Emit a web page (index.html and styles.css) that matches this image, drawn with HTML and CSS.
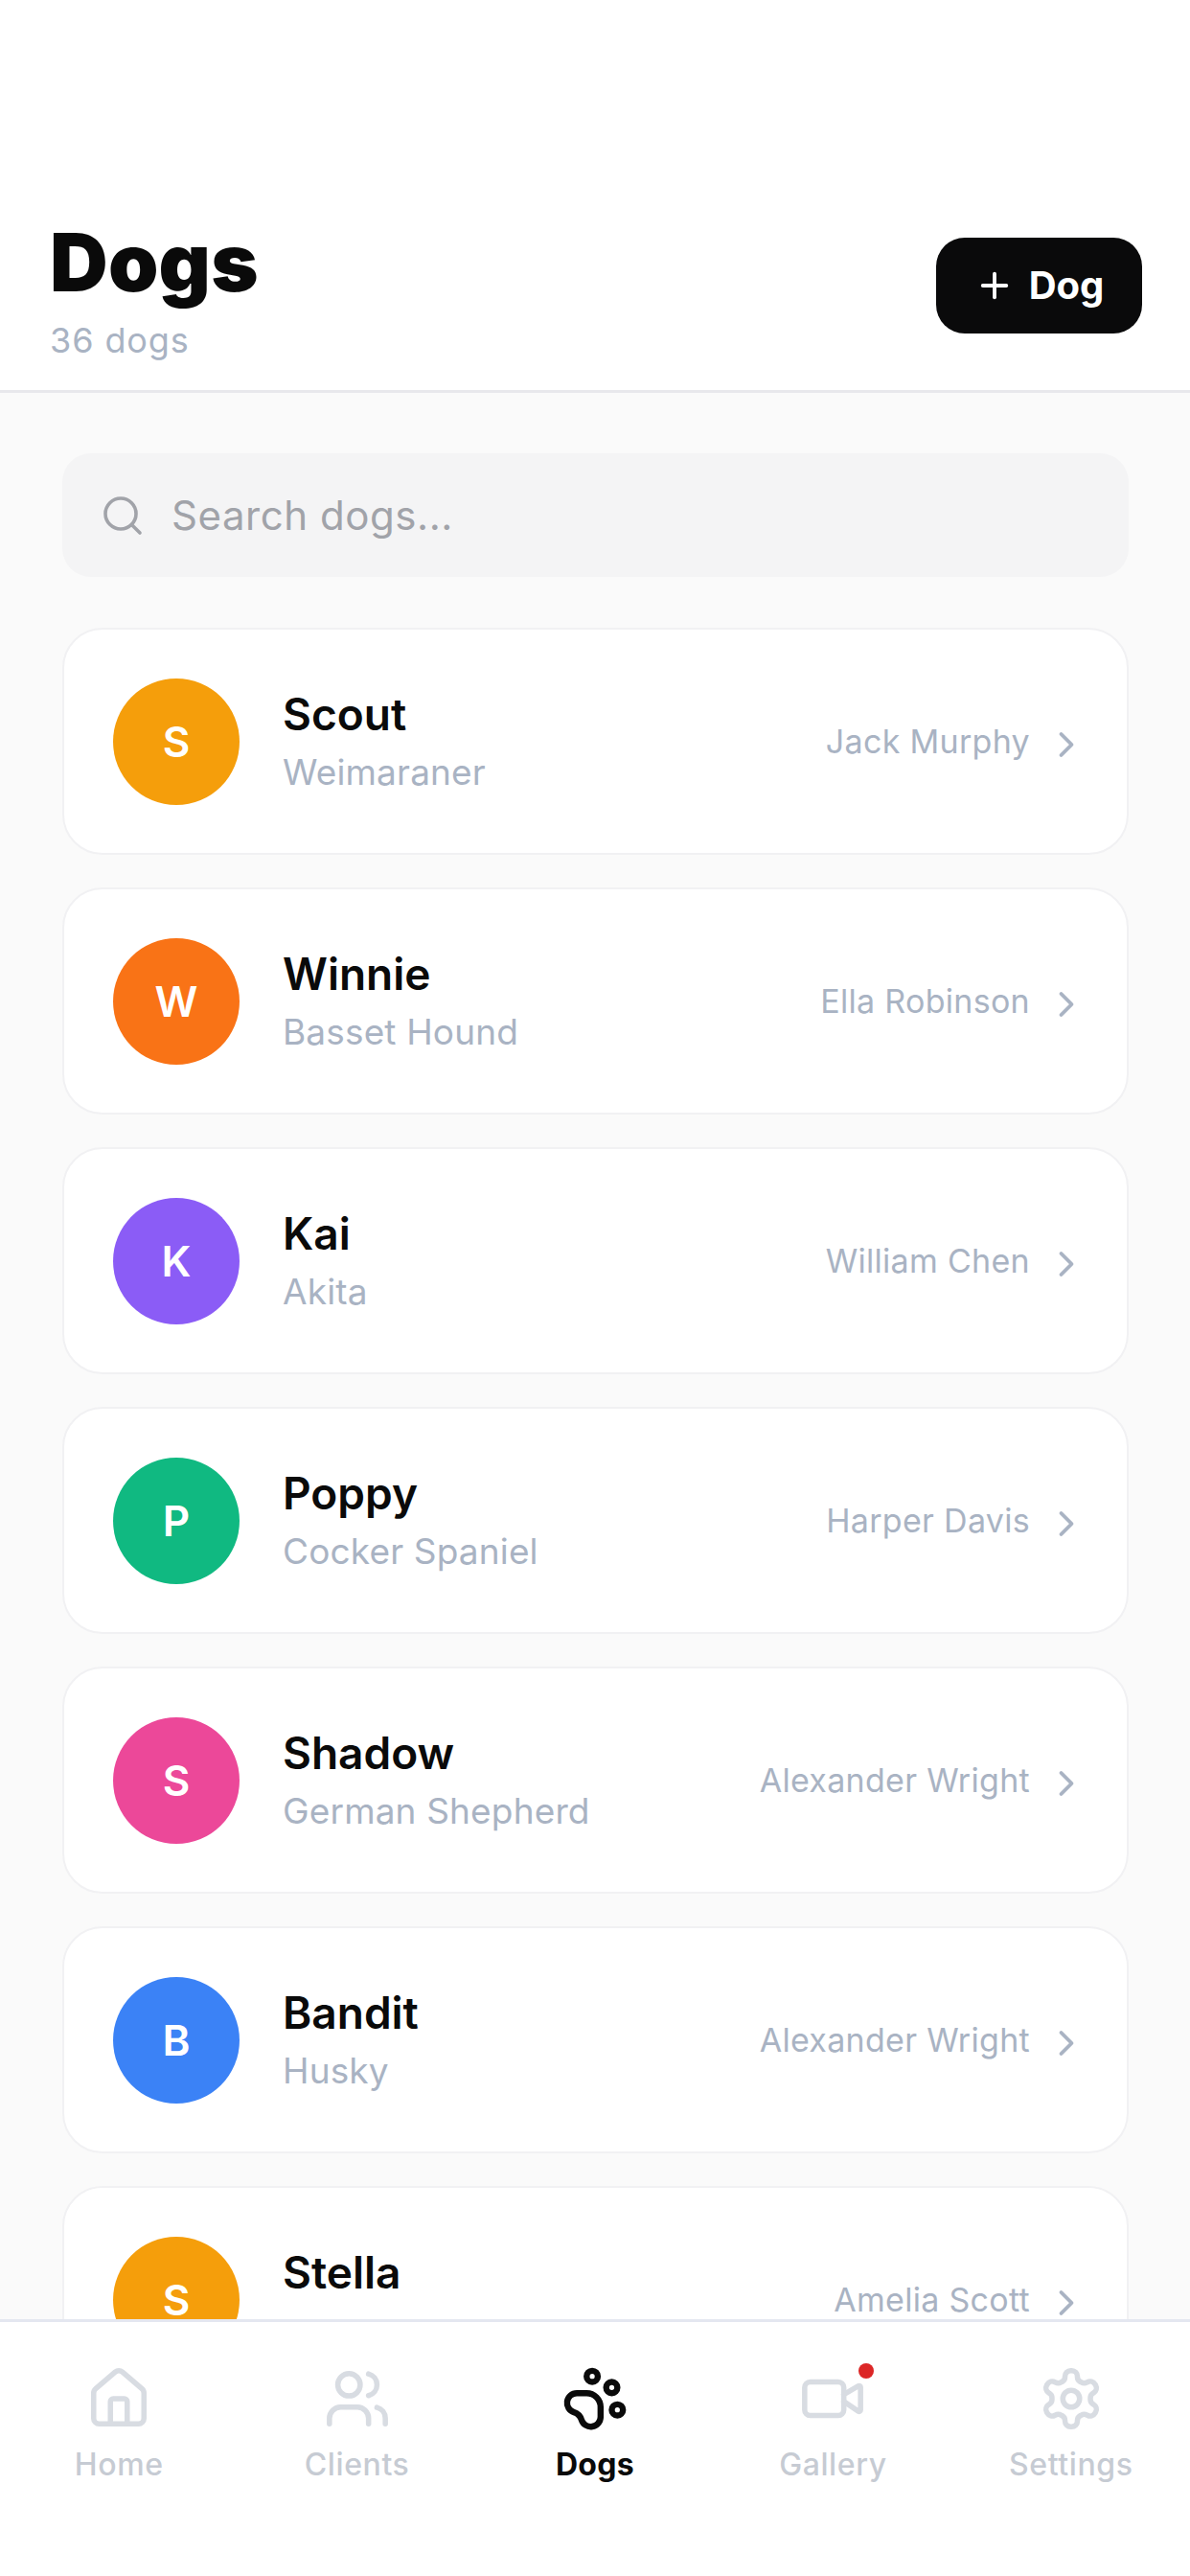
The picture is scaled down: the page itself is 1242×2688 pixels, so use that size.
FILE: index.html
```html
<!DOCTYPE html>
<html lang="en">
<head>
<meta charset="utf-8">
<title>Dogs</title>
<link rel="stylesheet" href="styles.css">
</head>
<body>
<div class="app">
  <header class="header">
    <div class="titles">
      <h1 class="title">Dogs</h1>
      <div class="count">36 dogs</div>
    </div>
    <button class="add-btn">
      <svg class="add-icon" viewBox="0 0 24 24"><path d="M5 12h14"/><path d="M12 5v14"/></svg>
      <span>Dog</span>
    </button>
  </header>
  <main class="main">
    <div class="search">
      <svg class="search-icon" viewBox="0 0 24 24"><circle cx="11" cy="11" r="8"/><path d="m21 21-4.3-4.3"/></svg>
      <span>Search dogs...</span>
    </div>
    <div class="list">
      <div class="card"><div class="avatar amber">S</div><div class="info"><div class="name">Scout</div><div class="breed">Weimaraner</div></div><div class="owner">Jack Murphy</div><svg class="chev" viewBox="0 0 24 24"><path d="m9 18 6-6-6-6"/></svg></div>
      <div class="card"><div class="avatar orange">W</div><div class="info"><div class="name">Winnie</div><div class="breed">Basset Hound</div></div><div class="owner">Ella Robinson</div><svg class="chev" viewBox="0 0 24 24"><path d="m9 18 6-6-6-6"/></svg></div>
      <div class="card"><div class="avatar violet">K</div><div class="info"><div class="name">Kai</div><div class="breed">Akita</div></div><div class="owner">William Chen</div><svg class="chev" viewBox="0 0 24 24"><path d="m9 18 6-6-6-6"/></svg></div>
      <div class="card"><div class="avatar green">P</div><div class="info"><div class="name">Poppy</div><div class="breed">Cocker Spaniel</div></div><div class="owner">Harper Davis</div><svg class="chev" viewBox="0 0 24 24"><path d="m9 18 6-6-6-6"/></svg></div>
      <div class="card"><div class="avatar pink">S</div><div class="info"><div class="name">Shadow</div><div class="breed">German Shepherd</div></div><div class="owner">Alexander Wright</div><svg class="chev" viewBox="0 0 24 24"><path d="m9 18 6-6-6-6"/></svg></div>
      <div class="card"><div class="avatar blue">B</div><div class="info"><div class="name">Bandit</div><div class="breed">Husky</div></div><div class="owner">Alexander Wright</div><svg class="chev" viewBox="0 0 24 24"><path d="m9 18 6-6-6-6"/></svg></div>
      <div class="card"><div class="avatar amber">S</div><div class="info"><div class="name">Stella</div><div class="breed">&nbsp;</div></div><div class="owner">Amelia Scott</div><svg class="chev" viewBox="0 0 24 24"><path d="m9 18 6-6-6-6"/></svg></div>
    </div>
  </main>
  <nav class="nav">
    <div class="tab">
      <svg class="tab-icon" viewBox="0 0 24 24"><path d="M15 21v-8a1 1 0 0 0-1-1h-4a1 1 0 0 0-1 1v8"/><path d="M3 10a2 2 0 0 1 .709-1.528l7-5.999a2 2 0 0 1 2.582 0l7 5.999A2 2 0 0 1 21 10v9a2 2 0 0 1-2 2H5a2 2 0 0 1-2-2z"/></svg>
      <span class="tab-label">Home</span>
    </div>
    <div class="tab">
      <svg class="tab-icon" viewBox="0 0 24 24"><path d="M16 21v-2a4 4 0 0 0-4-4H6a4 4 0 0 0-4 4v2"/><circle cx="9" cy="7" r="4"/><path d="M22 21v-2a4 4 0 0 0-3-3.87"/><path d="M16 3.13a4 4 0 0 1 0 7.75"/></svg>
      <span class="tab-label">Clients</span>
    </div>
    <div class="tab active">
      <svg class="tab-icon" viewBox="0 0 24 24"><circle cx="11" cy="4" r="2"/><circle cx="18" cy="8" r="2"/><circle cx="20" cy="16" r="2"/><path d="M9 10a5 5 0 0 1 5 5v3.5a3.5 3.5 0 0 1-6.84 1.045Q6.52 17.48 4.46 16.84A3.5 3.5 0 0 1 5.5 10Z"/></svg>
      <span class="tab-label">Dogs</span>
    </div>
    <div class="tab">
      <div class="icon-wrap">
        <svg class="tab-icon" viewBox="0 0 24 24"><path d="m16 13 5.223 3.482a.5.5 0 0 0 .777-.416V7.87a.5.5 0 0 0-.752-.432L16 10.5"/><rect x="2" y="6" width="14" height="12" rx="2"/></svg>
        <span class="dot"></span>
      </div>
      <span class="tab-label">Gallery</span>
    </div>
    <div class="tab">
      <svg class="tab-icon" viewBox="0 0 24 24"><path d="M12.22 2h-.44a2 2 0 0 0-2 2v.18a2 2 0 0 1-1 1.73l-.43.25a2 2 0 0 1-2 0l-.15-.08a2 2 0 0 0-2.73.73l-.22.38a2 2 0 0 0 .73 2.73l.15.1a2 2 0 0 1 1 1.72v.51a2 2 0 0 1-1 1.74l-.15.09a2 2 0 0 0-.73 2.73l.22.38a2 2 0 0 0 2.73.73l.15-.08a2 2 0 0 1 2 0l.43.25a2 2 0 0 1 1 1.73V20a2 2 0 0 0 2 2h.44a2 2 0 0 0 2-2v-.18a2 2 0 0 1 1-1.73l.43-.25a2 2 0 0 1 2 0l.15.08a2 2 0 0 0 2.73-.73l.22-.39a2 2 0 0 0-.73-2.73l-.15-.08a2 2 0 0 1-1-1.74v-.5a2 2 0 0 1 1-1.74l.15-.09a2 2 0 0 0 .73-2.73l-.22-.38a2 2 0 0 0-2.73-.73l-.15.08a2 2 0 0 1-2 0l-.43-.25a2 2 0 0 1-1-1.73V4a2 2 0 0 0-2-2z"/><circle cx="12" cy="12" r="3"/></svg>
      <span class="tab-label">Settings</span>
    </div>
  </nav>
</div>
</body>
</html>
```
FILE: styles.css
```css
* { box-sizing: border-box; }
html, body { margin: 0; padding: 0; background: #fff; }
body { font-family: Inter, "Liberation Sans", sans-serif; color: #0a0a0a; }
svg { fill: none; stroke: currentColor; stroke-width: 2; stroke-linecap: round; stroke-linejoin: round; display: block; }

.app { width: 1242px; height: 2688px; display: flex; flex-direction: column; overflow: hidden; }

.header { height: 410px; flex: none; background: #fff; border-bottom: 3px solid #e8e8ec; padding: 226px 50px 0 52px; display: flex; justify-content: space-between; align-items: flex-start; }
.titles { display: flex; flex-direction: column; }
.title { margin: 0; font-size: 84px; line-height: 96px; font-weight: 900; letter-spacing: 0.2px; color: #0a0a0a; }
.count { font-size: 36px; line-height: 48px; color: #a9b3c3; letter-spacing: 0.9px; margin-top: 9px; }
.add-btn { width: 215px; height: 100px; margin-top: 22px; border: 0; border-radius: 30px; background: #0a0a0b; color: #fff; font: 700 40px/1 Inter, sans-serif; display: flex; align-items: center; justify-content: center; gap: 15px; padding: 0; }
.add-icon { width: 42px; height: 42px; stroke-width: 2.2; }

.main { flex: 1; min-height: 0; overflow: hidden; background: #fafafa; padding: 63px 64px 0 65px; }
.search { height: 129px; border-radius: 30px; background: #f4f4f5; display: flex; align-items: center; padding: 0 39px; gap: 27px; color: #a1a3a9; font-size: 42px; letter-spacing: 0.55px; }
.search-icon { width: 48px; height: 48px; stroke-width: 1.8; }

.list { margin-top: 53px; display: flex; flex-direction: column; gap: 34px; }
.card { flex: none; height: 237px; background: #fff; border: 2px solid #f1f1f3; border-radius: 42px; padding: 0 41px 0 51px; display: flex; align-items: center; }
.avatar { width: 132px; height: 132px; border-radius: 50%; flex: none; color: #fff; font-size: 44px; font-weight: 600; display: flex; align-items: center; justify-content: center; }
.amber { background: #f59e0b; }
.orange { background: #f97316; }
.violet { background: #8b5cf6; }
.green { background: #10b981; }
.pink { background: #ec4899; }
.blue { background: #3b82f6; }
.info { flex: 1; min-width: 0; margin-left: 45px; }
.name { font-size: 46px; line-height: 58px; font-weight: 600; color: #0a0a0a; letter-spacing: 0; }
.breed { font-size: 37px; line-height: 50px; margin-top: 7px; color: #a9b3c3; letter-spacing: 0.15px; }
.owner { font-size: 34px; color: #a9b3c3; letter-spacing: 0.3px; white-space: nowrap; }
.chev { width: 44px; height: 44px; margin-left: 16px; color: #a9b3c3; stroke-width: 2.1; flex: none; position: relative; top: 3px; }

.nav { height: 268px; flex: none; background: #fff; border-top: 3px solid #e4e7f0; display: grid; grid-template-columns: repeat(5, 1fr); padding-top: 45px; }
.tab { display: flex; flex-direction: column; align-items: center; color: #d8dce2; }
.tab.active { color: #0a0a0a; }
.icon-wrap { position: relative; }
.tab-icon { width: 70px; height: 70px; stroke-width: 1.9; }
.active .tab-icon { stroke-width: 2.2; }
.dot { position: absolute; top: -2px; right: -8px; width: 16px; height: 16px; border-radius: 50%; background: #dc2626; }
.tab-label { font-size: 32px; line-height: 40px; margin-top: 14px; letter-spacing: 0.6px; color: #c6cbd3; font-weight: 500; }
.active .tab-label { color: #0a0a0a; font-weight: 700; letter-spacing: 0.3px; }
```
